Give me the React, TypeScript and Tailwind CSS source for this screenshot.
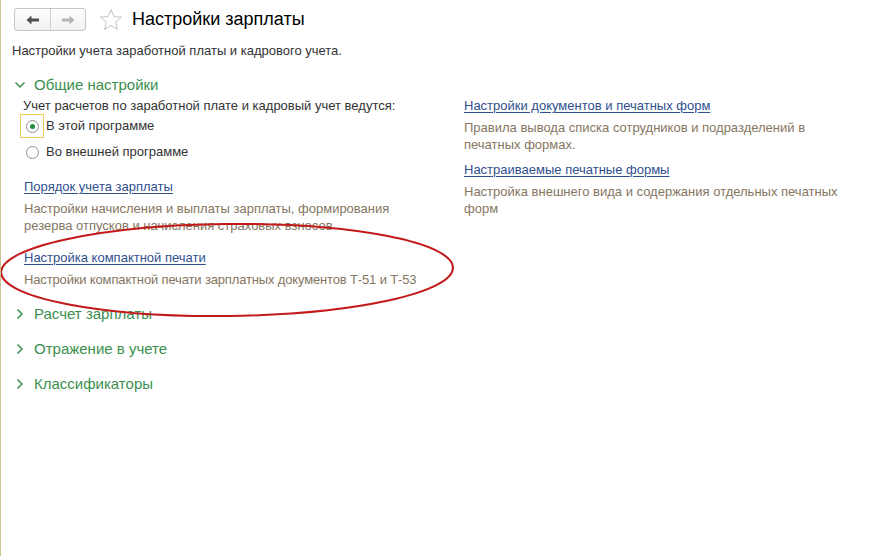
import React from "react";

const green = "text-[#3b8f4f]";

function ChevronDown() {
  return (
    <svg width="12" height="12" viewBox="0 0 12 12" className="shrink-0">
      <path d="M1.5 3.5 L6 8 L10.5 3.5" fill="none" stroke="#3b8f4f" strokeWidth="1.5" />
    </svg>
  );
}
function ChevronRight() {
  return (
    <svg width="12" height="12" viewBox="0 0 12 12" className="shrink-0">
      <path d="M3.5 1.5 L8 6 L3.5 10.5" fill="none" stroke="#3b8f4f" strokeWidth="1.5" />
    </svg>
  );
}

function Section({ title }: { title: string }) {
  return (
    <div className="flex items-center gap-[8px] h-[20px] pl-[13px]">
      <ChevronRight />
      <span className={`text-[15px] ${green}`}>{title}</span>
    </div>
  );
}

function LinkBlock({ link, desc }: { link: string; desc: React.ReactNode }) {
  return (
    <div className="flex flex-col">
      <a className="text-[13px] leading-[17px] text-[#2f4f8f] underline underline-offset-[2px] w-fit">{link}</a>
      <div className="mt-[5px] text-[13px] leading-[17px] text-[#85765f]">{desc}</div>
    </div>
  );
}

export default function App() {
  return (
    <div className="relative w-[894px] h-[556px] bg-white overflow-hidden border-l border-[#cbc394] font-['Liberation_Sans',Arial,sans-serif] text-[#333]">
      {/* header */}
      <div className="flex items-center pt-[8px] pl-[13px] h-[31px]">
        <div className="flex h-[23px] w-[72px] rounded-[3px] border border-[#c6c6c6] bg-gradient-to-b from-white to-[#f1f1f1]">
          <div className="flex w-[36px] items-center justify-center border-r border-[#d0d0d0]">
            <svg width="14" height="10" viewBox="0 0 14 10">
              <path d="M0.5 5 L5.5 0.5 L5.5 3.5 L13 3.5 L13 6.5 L5.5 6.5 L5.5 9.5 Z" fill="#505050" />
            </svg>
          </div>
          <div className="flex flex-1 items-center justify-center">
            <svg width="14" height="10" viewBox="0 0 14 10">
              <path d="M13.5 5 L8.5 0.5 L8.5 3.5 L1 3.5 L1 6.5 L8.5 6.5 L8.5 9.5 Z" fill="#b4b4b4" />
            </svg>
          </div>
        </div>
        <svg width="24" height="23" viewBox="0 0 24 23" className="ml-[13px]">
          <path
            d="M12 1.5 L14.9 8.6 L22.5 9.1 L16.7 14 L18.5 21.5 L12 17.4 L5.5 21.5 L7.3 14 L1.5 9.1 L9.1 8.6 Z"
            fill="none"
            stroke="#c4c4c4"
            strokeWidth="1"
            strokeLinejoin="round"
          />
        </svg>
        <h1 className="ml-[9px] text-[18px] text-black leading-[23px]">Настройки зарплаты</h1>
      </div>

      <div className="pl-[11px] mt-[11px] text-[13px] leading-[17px] text-[#333]">
        Настройки учета заработной платы и кадрового учета.
      </div>

      {/* Общие настройки */}
      <div className="mt-[16px] flex items-center gap-[8px] h-[20px] pl-[13px]">
        <ChevronDown />
        <span className={`text-[15px] ${green}`}>Общие настройки</span>
      </div>

      <div className="flex mt-[2px]">
        <div className="w-[440px] pl-[22px]">
          <div className="text-[13px] leading-[17px] text-[#333]">
            Учет расчетов по заработной плате и кадровый учет ведутся:
          </div>
          <div className="flex items-center h-[24px] -ml-[3px]">
            <div className="flex h-[24px] w-[24px] items-center justify-center border border-[#e8c95a]">
              <div className="flex h-[13px] w-[13px] items-center justify-center rounded-full border border-[#8e8e8e] bg-white">
                <div className="h-[5px] w-[5px] rounded-full bg-[#1f8f3f]" />
              </div>
            </div>
            <span className="ml-[2px] text-[13px] text-[#333]">В этой программе</span>
          </div>
          <div className="flex items-center h-[24px] mt-[2px] -ml-[3px]">
            <div className="flex h-[24px] w-[24px] items-center justify-center">
              <div className="h-[13px] w-[13px] rounded-full border border-[#8e8e8e] bg-white" />
            </div>
            <span className="ml-[2px] text-[13px] text-[#333]">Во внешней программе</span>
          </div>

          <div className="mt-[14px] pl-[1px] w-[390px]">
            <LinkBlock
              link="Порядок учета зарплаты"
              desc={
                <>
                  Настройки начисления и выплаты зарплаты, формирования
                  <br />
                  резерва отпусков и начисления страховых взносов
                </>
              }
            />
          </div>
          <div className="mt-[15px] pl-[1px]">
            <LinkBlock
              link="Настройка компактной печати"
              desc={<span className="tracking-[-0.15px]">Настройки компактной печати зарплатных документов Т-51 и Т-53</span>}
            />
          </div>
        </div>

        <div className="ml-[23px] w-[385px]">
          <LinkBlock link="Настройки документов и печатных форм" desc="Правила вывода списка сотрудников и подразделений в печатных формах." />
          <div className="mt-[8px]">
            <LinkBlock link="Настраиваемые печатные формы" desc="Настройка внешнего вида и содержания отдельных печатных форм" />
          </div>
        </div>
      </div>

      <div className="mt-[16px] flex flex-col gap-[15px]">
        <Section title="Расчет зарплаты" />
        <Section title="Отражение в учете" />
        <Section title="Классификаторы" />
      </div>

      {/* red hand-drawn ellipse */}
      <svg className="pointer-events-none absolute left-0 top-0" width="894" height="556">
        <ellipse cx="226" cy="270" rx="226" ry="46" fill="none" stroke="#c21a1a" strokeWidth="2" transform="rotate(-0.6 226 270)" />
      </svg>
    </div>
  );
}
